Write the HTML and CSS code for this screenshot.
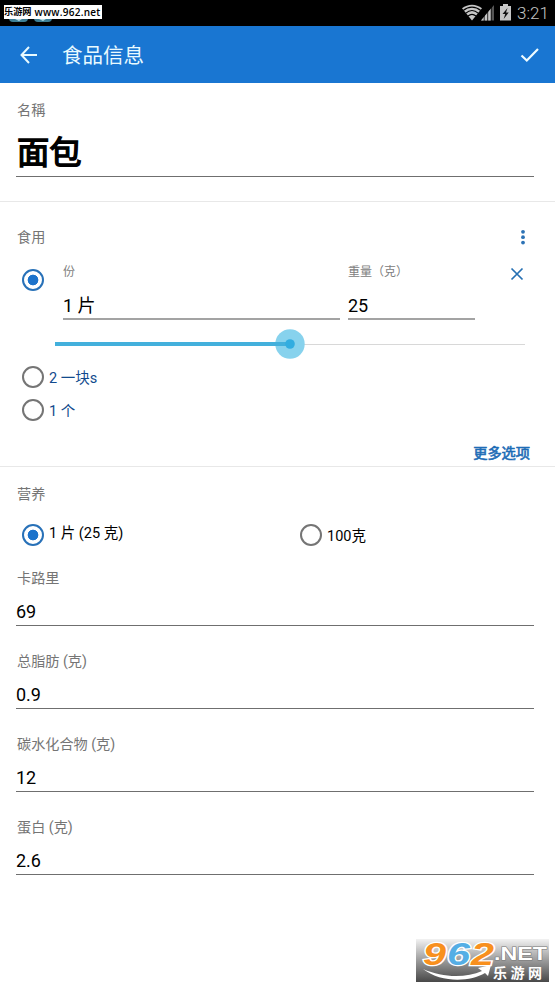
FILE: index.html
```
<!DOCTYPE html>
<html lang="zh-CN">
<head>
<meta charset="utf-8">
<title>食品信息</title>
<link rel="stylesheet" href="styles.css">
</head>
<body>
<div class="status">
  <svg class="status-notes" width="54" height="26" viewBox="0 0 54 26"><g fill="#3c7f96"><rect x="9" y="5" width="19" height="17" rx="4"/><rect x="34" y="5" width="18" height="17" rx="4"/></g><path d="M15 19h7l-3 2zM39 19h7l-3 2z" fill="#b9dce4"/></svg>
  <div class="source-tag"><span class="source-name">乐游网</span><span class="source-url">www.962.net</span></div>
  <svg class="status-icons" width="50" height="26" viewBox="0 0 50 26">
    <path d="M10 20.500 0 8.300C6 3.600 14 3.600 20 8.300z" fill="#c6c6c6"/>
    <g fill="none" stroke="#000" stroke-width="1.1"><path d="M1.2 10.5C6.5 6 13.500 6 18.800 10.500"/><path d="M3.500 13.300C7.500 9.800 12.500 9.800 16.500 13.300"/><path d="M6 16C8.500 13.900 11.500 13.900 14 16"/></g>
    <path d="M19 20.500 32 5v15.500z" fill="#555"/><path d="M19 20.500 29 8.600v11.900z" fill="#c6c6c6"/>
    <path d="M22.200 15v6M25.700 11v10M29.200 7v14" stroke="#000" stroke-width=".8"/>
    <path d="M38 6h3V4h5v2h3v14.500H38z" fill="#c6c6c6"/><path d="m45.500 8-5 6h2.700l-1.500 5 5-6.500H44z" fill="#111"/>
  </svg>
  <span class="clock">3:21</span>
</div>
<header class="appbar">
  <svg width="18" height="18" viewBox="0 0 18 18"><path d="M17 9H2M9 1 1.500 9 9 17" fill="none" stroke="#e8faff" stroke-width="2"/></svg>
  <h1>食品信息</h1>
  <svg class="check" width="20" height="16" viewBox="0 0 20 16"><path d="m1.500 8.500 5.300 5L18 2" fill="none" stroke="#effcff" stroke-width="2.200"/></svg>
</header>

<main>
<section class="name">
  <div class="label zh-hant">名稱</div>
  <div class="food-name">面包</div>
</section>

<section class="serving">
  <div class="serving-head"><span class="label">食用</span>
    <svg width="6" height="16" viewBox="0 0 6 16" fill="#2c72b5"><circle cx="3" cy="2.800" r="1.900"/><circle cx="3" cy="8.200" r="1.900"/><circle cx="3" cy="13.600" r="1.900"/></svg>
  </div>
  <div class="serving-edit">
    <span class="radio on"></span>
    <div class="unit"><div class="small">份</div><div class="input">1 片</div></div>
    <div class="weight"><div class="small">重量（克）</div><div class="input">25</div></div>
    <svg class="remove" width="14" height="14" viewBox="0 0 14 14"><path d="m1.500 1.500 11 11m0-11-11 11" stroke="#2570b3" stroke-width="1.700"/></svg>
  </div>
  <svg class="slider" width="470" height="30" viewBox="0 0 470 30"><path d="M235 15.500h235" stroke="#d8d8d8"/><circle cx="235" cy="15" r="14.700" fill="#87d2ed"/><path d="M0 15h235" stroke="#43b0dc" stroke-width="4"/><circle cx="235" cy="15" r="4.800" fill="#32ade0"/></svg>
  <div class="option"><span class="radio"></span><span>2 一块s</span></div>
  <div class="option"><span class="radio"></span><span>1 个</span></div>
  <div class="more">更多选项</div>
</section>

<section class="nutrition">
  <div class="label">营养</div>
  <div class="basis">
    <div class="choice first"><span class="radio on"></span><span class="choice-text">1 片 (25 克)</span></div>
    <div class="choice"><span class="radio"></span><span class="choice-text">100克</span></div>
  </div>
  <div class="field"><div class="label">卡路里</div><div class="value">69</div></div>
  <div class="field"><div class="label">总脂肪 (克)</div><div class="value">0.9</div></div>
  <div class="field"><div class="label">碳水化合物 (克)</div><div class="value">12</div></div>
  <div class="field"><div class="label">蛋白 (克)</div><div class="value">2.6</div></div>
</section>
</main>

<svg class="site-logo" width="133" height="53" viewBox="0 -10 133 53">
  <defs><linearGradient id="fade" x2="0" y2="1"><stop stop-color="#f2f2f2"/><stop offset=".5" stop-color="#9b9b9b"/><stop offset="1" stop-color="#484848"/></linearGradient></defs>
  <rect width="133" height="43" fill="url(#fade)"/>
  <path d="M7 30C25 44 54 43 69 34l3 3 3-11-13 3 4 3C50 39 27 39 7 30z" fill="#fff"/>
  <g class="logo-digits"><text x="7" y="26" textLength="23" lengthAdjust="spacingAndGlyphs" fill="#f8901e">9</text><text x="31" y="26" textLength="23" lengthAdjust="spacingAndGlyphs" fill="#55aee5">6</text><text x="55" y="26" textLength="23" lengthAdjust="spacingAndGlyphs" fill="#f8901e">2</text></g>
  <text class="logo-net" x="78" y="21" textLength="53" lengthAdjust="spacingAndGlyphs">.NET</text>
  <text class="logo-zh" x="77" y="38.500" textLength="49">乐游网</text>
</svg>
</body>
</html>
```

FILE: styles.css
```
* { box-sizing: border-box; }
body {
  margin: 0;
  width: 555px;
  height: 988px;
  overflow: hidden;
  position: relative;
  background: #fff;
  color: #000;
  font-family: Roboto, "Noto Sans CJK SC", sans-serif;
}
svg { display: block; flex: none; }

.status { position: relative; height: 26px; background: #000; display: flex; align-items: center; }
.status-notes { margin-right: auto; }
.source-tag {
  position: absolute; left: 4px; top: 5px; width: 98px; height: 14px;
  display: flex; align-items: center; gap: 3px;
  background: #fff; font-weight: 700; line-height: 14px; white-space: nowrap;
}
.source-name { font-size: 9.2px; }
.source-url { font: 600 10px/14px "Open Sans", sans-serif; letter-spacing: .25px; }
.clock { width: 43px; padding-left: 5px; font-size: 17px; line-height: 26px; color: #c3c3c3; font-weight: 300; }

.appbar { height: 57px; padding: 0 15px 0 20px; display: flex; align-items: center; background: #1976d2; }
.appbar h1 { margin: 2px auto 0 24px; font-size: 20.5px; line-height: 30px; font-weight: 400; color: #e8faff; }

.label { font-size: 14.15px; line-height: 20px; color: #757575; }
.zh-hant { font-family: Roboto, "Noto Sans CJK TC", sans-serif; }
.name { height: 119px; padding: 17px 21px 0 17px; border-bottom: 1px solid #e8e8e8; }
.food-name {
  height: 57px; margin-left: -1px; padding-left: 1px; line-height: 67px;
  border-bottom: 1px solid #6f6f6f; font-size: 32.3px; font-weight: 400;
  -webkit-text-stroke: 1.4px #000;
}

.serving { height: 265px; padding-top: 25px; border-bottom: 1px solid #e8e8e8; }
.serving-head { display: flex; align-items: center; justify-content: space-between; height: 20px; padding: 0 29px 0 17px; }
.serving-edit { display: flex; height: 73px; padding: 0 31px 0 22px; }
.radio { width: 22px; height: 22px; flex: none; border: 2px solid #757575; border-radius: 50%; }
.radio.on { border-color: #2871b8; background: radial-gradient(circle, #1d73cb 0 5px, transparent 5.7px); }
.serving-edit .radio { margin-top: 22px; }
.unit { width: 277px; margin-left: 19px; }
.weight { width: 127px; margin-left: 8px; }
.small { margin-top: 16px; font-size: 12px; line-height: 18px; color: #808080; }
.input { height: 39px; line-height: 49px; font-size: 18px; border-bottom: 2px solid #a3a3a3; }
.remove { margin: 20px 0 0 auto; }
.slider { margin: 9px 0 3px 55px; }
.option { height: 33px; padding-left: 22px; display: flex; align-items: center; gap: 5px; font-size: 14.5px; line-height: 20px; color: #124a8d; }
.option .radio { margin-top: -3px; }
.more { margin: 14px 25px 0 0; text-align: right; font-size: 14.2px; line-height: 22px; color: #1e6db6; -webkit-text-stroke: .6px #1e6db6; }

.nutrition { padding: 17px 21px 0 16px; }
.nutrition > .label { margin-left: 1px; }
.basis { display: flex; height: 64px; padding: 20px 0 0 6px; }
.choice { display: flex; height: 22px; gap: 5px; font-size: 14.5px; line-height: 25px; }
.first { width: 278px; }
.first .choice-text { line-height: 20px; }
.field { height: 83px; }
.field .label { padding-left: 1px; }
.value { height: 38px; line-height: 47px; font-size: 18px; border-bottom: 1px solid #6f6f6f; }

.site-logo { position: absolute; left: 416px; top: 929px; }
.logo-digits { font: italic 700 32px "Liberation Sans", sans-serif; stroke: #fff; stroke-width: 2.5px; paint-order: stroke; }
.logo-net { font: 700 18px "Liberation Sans", sans-serif; fill: #fff; stroke: #777; stroke-width: 1px; paint-order: stroke; }
.logo-zh { font: 700 14px "Noto Sans CJK SC", sans-serif; fill: #fff; }
```
